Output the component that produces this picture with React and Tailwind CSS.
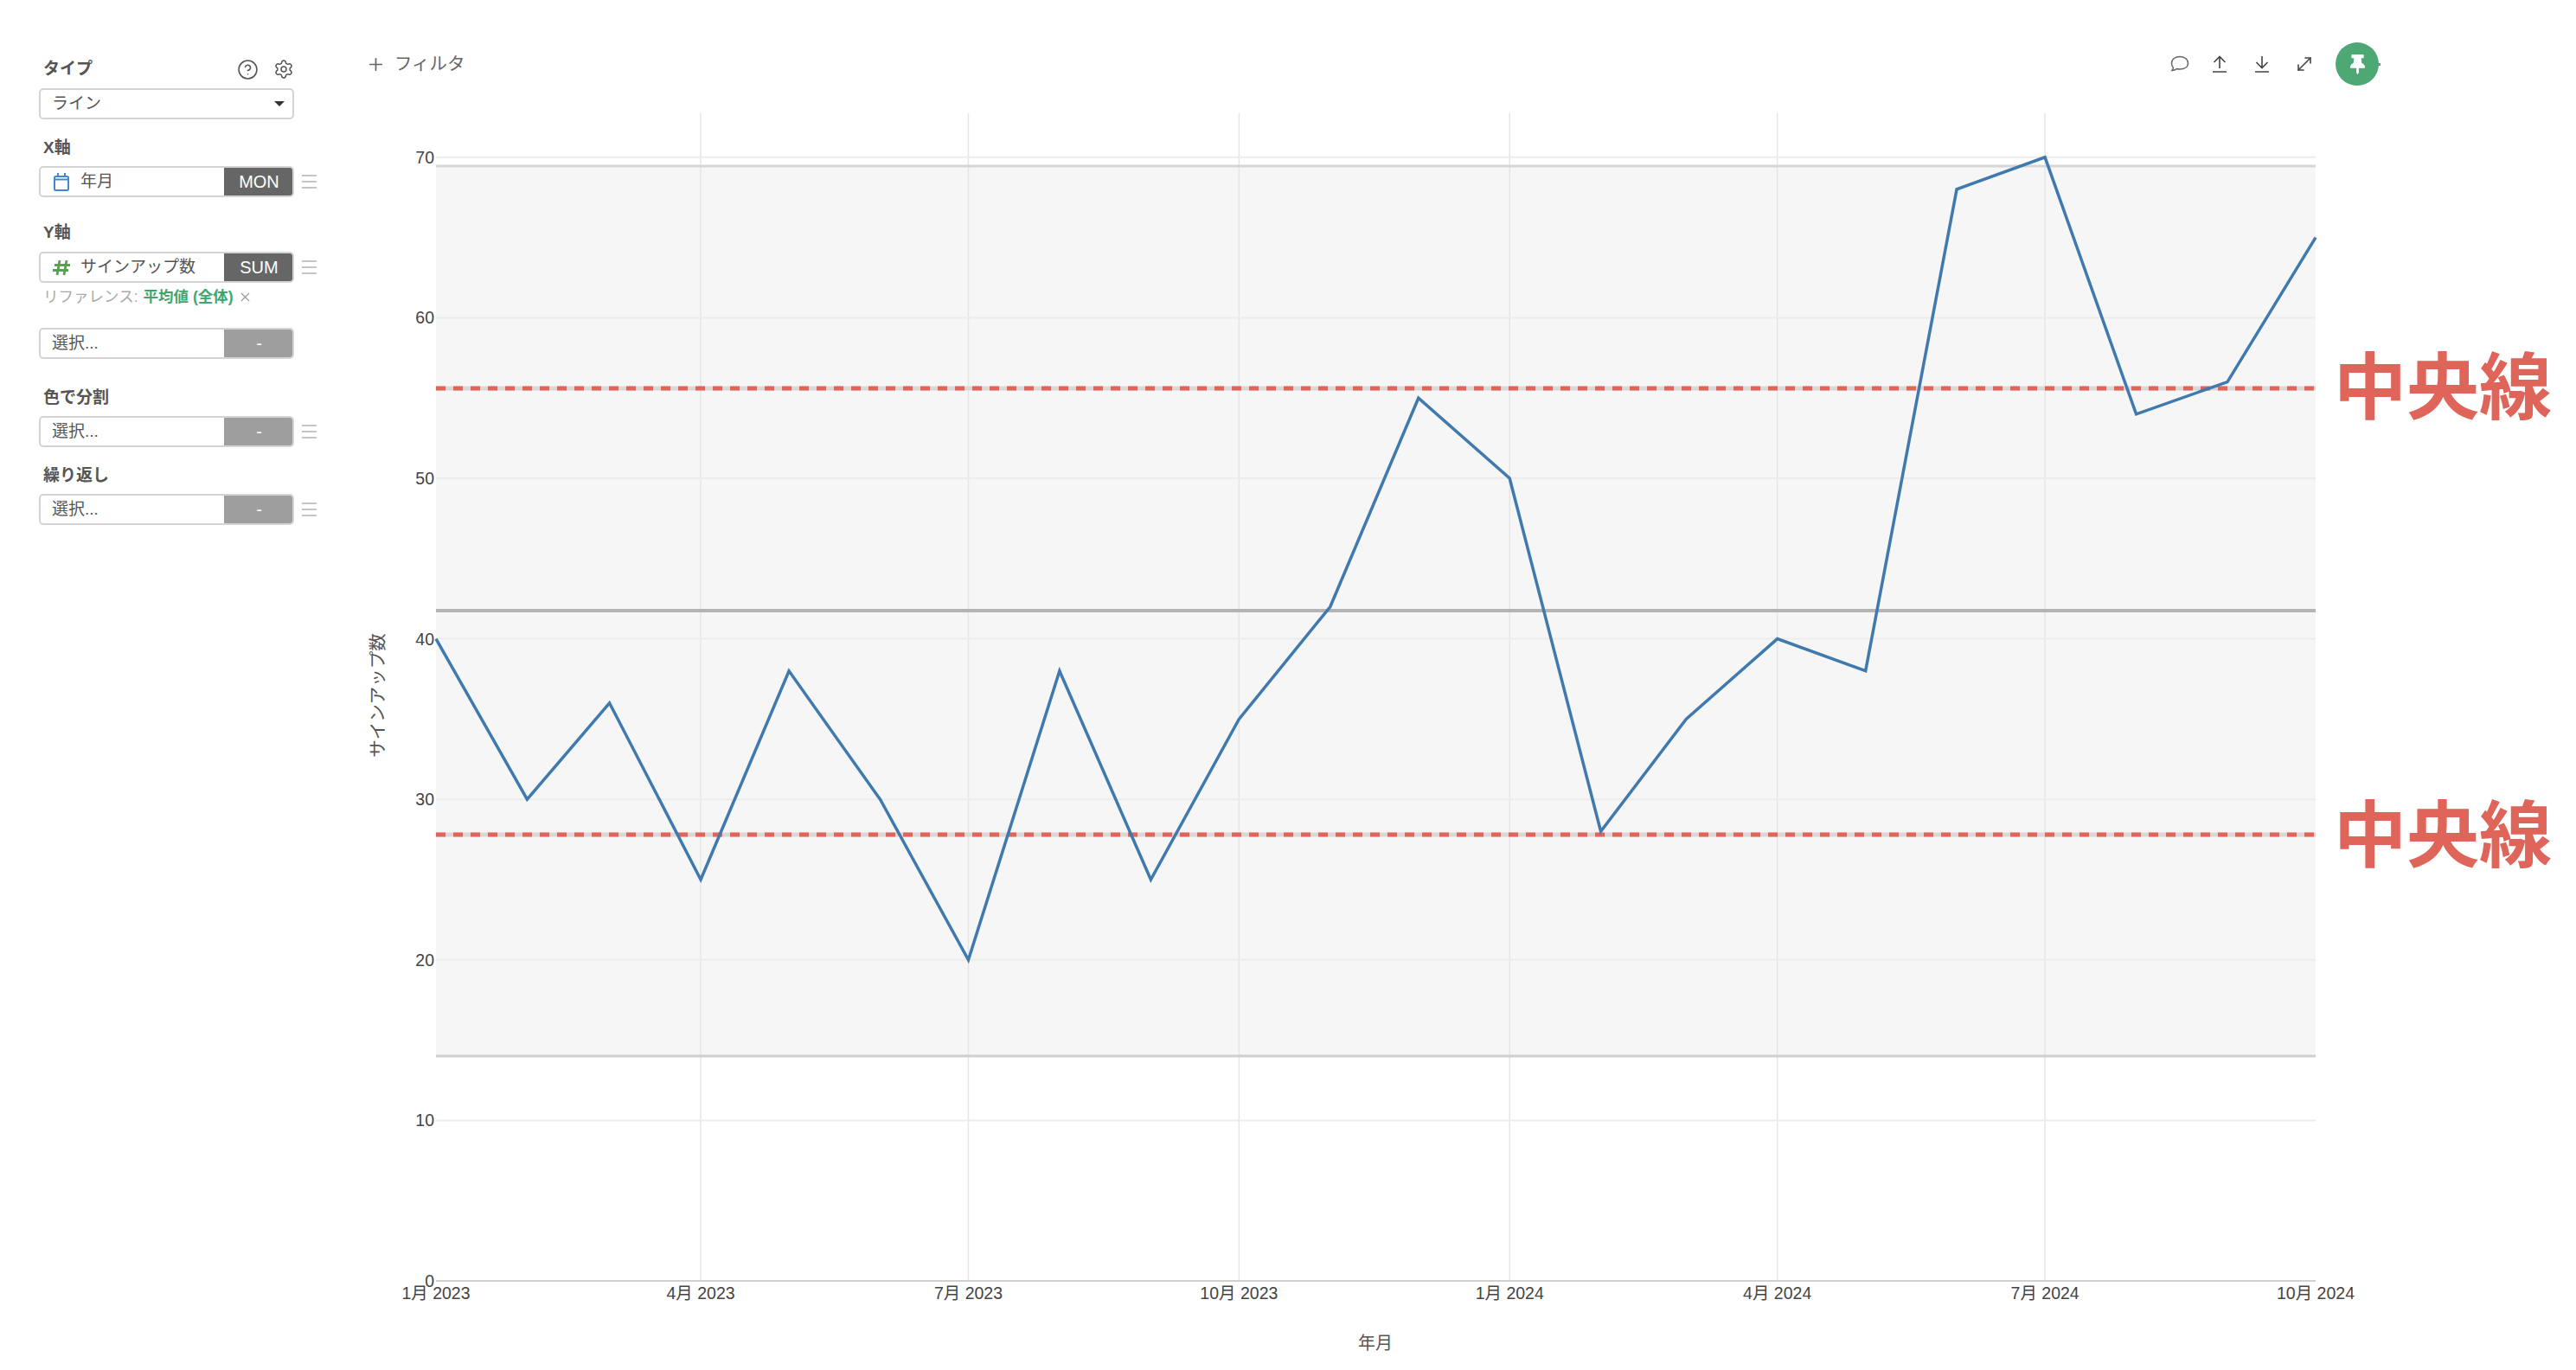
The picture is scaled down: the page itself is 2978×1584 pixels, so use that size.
import React from 'react'
import { CircleHelp, Settings, MoveDiagonal, Plus, X } from 'lucide-react'
import { FaThumbtack } from 'react-icons/fa'

const FONT = '"Liberation Sans", "Noto Sans CJK JP", sans-serif'

const monthDays = [31, 28, 31, 30, 31, 30, 31, 31, 30, 31, 30, 31, 31, 29, 31, 30, 31, 30, 31, 31, 30]
const values = [40, 30, 36, 25, 38, 30, 20, 38, 25, 35, 42, 55, 50, 28, 35, 40, 38, 68, 70, 54, 56, 65]
const xTicks = [
  [0, '1月 2023'], [3, '4月 2023'], [6, '7月 2023'], [9, '10月 2023'],
  [12, '1月 2024'], [15, '4月 2024'], [18, '7月 2024'], [21, '10月 2024'],
]

const LEFT = 504
const RIGHT = 2677
const ZERO = 1481
const UNIT = 18.56

function xAt(month) {
  let days = 0
  for (let i = 0; i < month; i++) days += monthDays[i]
  return LEFT + (days / 639) * (RIGHT - LEFT)
}
const yAt = (v) => ZERO - v * UNIT

function Label({ children, className = '' }) {
  return <div className={`h-[24px] pl-[5px] text-[19px] leading-[24px] font-bold text-[#555] ${className}`}>{children}</div>
}

function Handle() {
  return (
    <div className="ml-[9px] flex w-[17px] flex-col gap-[5px]">
      <div className="h-[2px] bg-[#c4c4c4]" />
      <div className="h-[2px] bg-[#c4c4c4]" />
      <div className="h-[2px] bg-[#c4c4c4]" />
    </div>
  )
}

function FieldRow({ icon, text, agg, handle = true, muted = false }) {
  return (
    <div className="flex items-center">
      <div className="flex h-[36px] w-[295px] overflow-hidden rounded-[5px] border-2 border-[#d4d4d4] bg-white">
        <div className="flex flex-1 items-center text-[19px] text-[#555]">
          {icon ? <div className="flex w-[46px] justify-center pl-[2px]">{icon}</div> : <div className="w-[13px]" />}
          <span>{text}</span>
        </div>
        <div className={`-my-[2px] -mr-[2px] flex w-[81px] items-center justify-center text-[20px] text-white ${muted ? 'bg-[#9e9e9e]' : 'bg-[#666666]'}`}>
          {agg}
        </div>
      </div>
      {handle && <Handle />}
    </div>
  )
}

function CalendarIcon() {
  return (
    <svg width="18" height="21" viewBox="0 0 18 21" fill="none" stroke="#3f87d0" strokeWidth="2">
      <rect x="1" y="4" width="16" height="16" rx="1.5" />
      <path d="M1 7.500h16M5 0v5M13 0v5" />
    </svg>
  )
}

function HashIcon() {
  return (
    <svg width="20" height="19" viewBox="0 0 20 19" fill="none" stroke="#4fa552" strokeWidth="2.8">
      <path d="M8 1 5 18M16 1l-3 17M2 6.500h18M0 12.500h18" />
    </svg>
  )
}

function Sidebar() {
  return (
    <aside className="w-[400px] shrink-0 pt-[68px] pl-[45px]">
      <div className="flex h-[24px] w-[295px] items-center justify-between">
        <Label>タイプ</Label>
        <div className="flex items-center gap-[17px] text-[#555]">
          <CircleHelp size={25} strokeWidth={1.5} />
          <Settings size={24} strokeWidth={1.5} />
        </div>
      </div>
      <div className="mt-[10px] flex h-[36px] w-[295px] items-center justify-between rounded-[5px] border-2 border-[#d4d4d4] bg-white pr-[9px] pl-[13px] text-[19px] text-[#555]">
        <span>ライン</span>
        <div className="h-0 w-0 border-x-[6px] border-t-[6px] border-x-transparent border-t-[#333]" />
      </div>

      <Label className="mt-[21px]">X軸</Label>
      <div className="mt-[9px]">
        <FieldRow icon={<CalendarIcon />} text="年月" agg="MON" />
      </div>

      <Label className="mt-[29px]">Y軸</Label>
      <div className="mt-[10px]">
        <FieldRow icon={<HashIcon />} text="サインアップ数" agg="SUM" />
      </div>
      <div className="mt-[4px] flex h-[24px] items-center pl-[5px] text-[17.500px] text-[#aaa]">
        <span>リファレンス:</span>
        <span className="ml-[6px] font-bold text-[#3fa66d]">平均値 (全体)</span>
        <X size={17} className="ml-[5px] text-[#999]" strokeWidth={1.6} />
      </div>

      <div className="mt-[24px]">
        <FieldRow text="選択..." agg="-" handle={false} muted />
      </div>

      <Label className="mt-[33px]">色で分割</Label>
      <div className="mt-[9px]">
        <FieldRow text="選択..." agg="-" muted />
      </div>

      <Label className="mt-[21px]">繰り返し</Label>
      <div className="mt-[9px]">
        <FieldRow text="選択..." agg="-" muted />
      </div>
    </aside>
  )
}

function Toolbar() {
  return (
    <div className="flex h-[130px] shrink-0 items-start pt-[50px] pr-[228px] pl-[23px]">
      <div className="flex h-[48px] items-center text-[20.500px] text-[#666]">
        <Plus size={23} strokeWidth={1.8} />
        <span className="ml-[10px]">フィルタ</span>
      </div>
      <div className="ml-auto flex h-[48px] items-center text-[#444]">
        <svg width="22" height="20" viewBox="0 0 22 20" fill="none" stroke="#666" strokeWidth="1.5">
          <path d="M11 1.500c5.200 0 9.500 2.900 9.500 7.500s-4.300 7-9.500 7c-1.300 0-2.500-.2-3.600-.5-1.400 1.300-3.300 2-5.400 2 .8-.9 1.300-2 1.400-3.200C2 13 1.500 11 1.500 9c0-4.600 4.300-7.500 9.500-7.500Z" />
        </svg>
        <svg className="ml-[26px]" width="18" height="20" viewBox="0 0 18 20" fill="none" stroke="#444" strokeWidth="1.6">
          <path d="M9 15V1.500M2.500 8 9 1.500 15.500 8M1 19h16" />
        </svg>
        <svg className="ml-[31px]" width="18" height="20" viewBox="0 0 18 20" fill="none" stroke="#444" strokeWidth="1.6">
          <path d="M9 1v13.500M2.500 8 9 14.500 15.500 8M1 19h16" />
        </svg>
        <MoveDiagonal className="ml-[28px]" size={24} strokeWidth={1.6} />
        <div className="relative ml-[24px] flex h-[50px] w-[50px] items-center justify-center rounded-full bg-[#4ea874]">
          <FaThumbtack size={23} className="text-white" />
          <div className="absolute top-[24px] right-[-2px] h-[3px] w-[3px] bg-[#4ea874]" />
        </div>
      </div>
    </div>
  )
}

function Chart() {
  const points = values.map((v, i) => `${xAt(i).toFixed(1)},${yAt(v).toFixed(1)}`).join(' ')
  return (
    <svg className="block h-[1454px] w-[2578px]" viewBox="400 130 2578 1454" style={{ fontFamily: FONT }}>
      <rect x={LEFT} y={192} width={RIGHT - LEFT} height={1029} fill="#f6f6f6" />
      {xTicks.slice(1, -1).map(([m]) => (
        <line key={m} x1={xAt(m)} x2={xAt(m)} y1={131} y2={ZERO} stroke="#e6e6e6" strokeWidth="1.5" />
      ))}
      {[10, 20, 30, 40, 50, 60, 70].map((v) => (
        <line key={v} x1={LEFT} x2={RIGHT} y1={yAt(v)} y2={yAt(v)} stroke="#ececec" strokeWidth="2" />
      ))}
      <line x1={LEFT} x2={RIGHT} y1={ZERO} y2={ZERO} stroke="#d0d0d0" strokeWidth="2" />

      <line x1={LEFT} x2={RIGHT} y1={192} y2={192} stroke="#d6d6d6" strokeWidth="3" />
      <line x1={LEFT} x2={RIGHT} y1={706} y2={706} stroke="#b4b4b4" strokeWidth="4" />
      <line x1={LEFT} x2={RIGHT} y1={1221} y2={1221} stroke="#cfcfcf" strokeWidth="3" />
      <line x1={LEFT} x2={RIGHT} y1={449} y2={449} stroke="#d8d8d8" strokeWidth="5" />
      <line x1={LEFT} x2={RIGHT} y1={449} y2={449} stroke="#df6459" strokeWidth="5" strokeDasharray="11 9" />
      <line x1={LEFT} x2={RIGHT} y1={965} y2={965} stroke="#d8d8d8" strokeWidth="5" />
      <line x1={LEFT} x2={RIGHT} y1={965} y2={965} stroke="#df6459" strokeWidth="5" strokeDasharray="11 9" />

      <polyline points={points} fill="none" stroke="#3f79ad" strokeWidth="3.500" strokeLinejoin="miter" />

      {[0, 10, 20, 30, 40, 50, 60, 70].map((v) => (
        <text key={v} x={502} y={yAt(v) + 7} textAnchor="end" fontSize="19.500" fill="#444">{v}</text>
      ))}
      {xTicks.map(([m, label]) => (
        <text key={m} x={xAt(m)} y={1502} textAnchor="middle" fontSize="19.500" fill="#444">{label}</text>
      ))}
      <text x={1590} y={1560} textAnchor="middle" fontSize="20" fill="#555">年月</text>
      <text x={444} y={804} transform="rotate(-90 444 804)" textAnchor="middle" fontSize="20.500" fill="#555">サインアップ数</text>

      <text x={2698} y={478} fontSize="84" fontWeight="700" fill="#df6459">中央線</text>
      <text x={2698} y={996} fontSize="84" fontWeight="700" fill="#df6459">中央線</text>
    </svg>
  )
}

export default function App() {
  return (
    <div className="flex h-[1584px] w-[2978px] overflow-hidden bg-white" style={{ fontFamily: FONT }}>
      <Sidebar />
      <main className="flex min-w-0 flex-1 flex-col">
        <Toolbar />
        <Chart />
      </main>
    </div>
  )
}
